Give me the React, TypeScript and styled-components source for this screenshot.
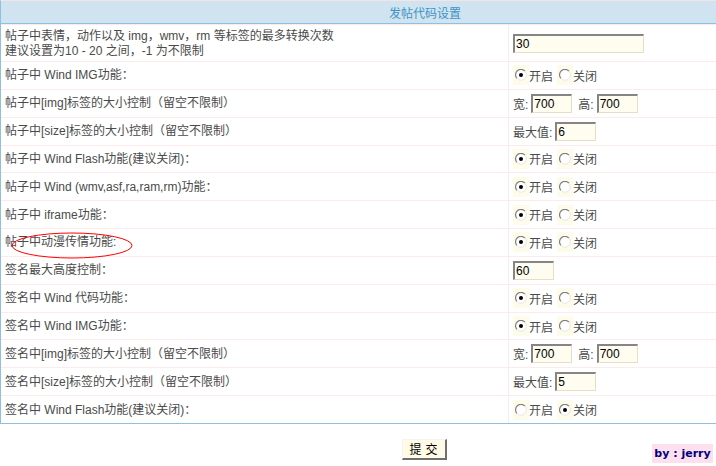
import React from "react";
import styled, { createGlobalStyle } from "styled-components";

const Global = createGlobalStyle`
  html, body {
    margin: 0;
    padding: 0;
    background: #ffffff;
    overflow: hidden;
  }
  body {
    font-family: "Liberation Sans", "Noto Sans CJK SC", sans-serif;
    font-size: 12px;
    color: #4a4a4a;
  }
`;

const Page = styled.div`
  position: relative;
  width: 716px;
  height: 466px;
  overflow: hidden;
`;

const Table = styled.div`
  width: 848px;
  display: grid;
  grid-template-columns: 508px 1fr;
  border-top: 1px solid #f6e4e4;
  border-left: 1px solid #8fc0e0;
  border-bottom: 1px solid #8fc0e0;
  box-sizing: border-box;
`;

const Header = styled.div`
  grid-column: 1 / -1;
  height: 22px;
  background: #cfe4f0;
  border-bottom: 1px solid #8fc0e0;
  color: #3f93c4;
  font-family: "Noto Sans CJK SC", sans-serif;
  font-size: 12px;
  display: flex;
  align-items: center;
  justify-content: center;
  padding-left: 1px;
`;

/* every cell is 27.85px tall including its top rule; the first row is 37px */
const Label = styled.div<{ $tall?: boolean }>`
  box-sizing: border-box;
  height: ${(p) => (p.$tall ? "37px" : "27.85px")};
  border-top: 1px solid #fdeaea;
  border-right: 1px solid #fdeaea;
  padding: 1px 0 0 4px;
  display: flex;
  flex-direction: column;
  justify-content: center;
  line-height: 15px;
  white-space: nowrap;
`;

const Field = styled.div<{ $tall?: boolean }>`
  box-sizing: border-box;
  height: ${(p) => (p.$tall ? "37px" : "27.85px")};
  border-top: 1px solid #fdeaea;
  padding-left: 4px;
  display: flex;
  align-items: center;
  white-space: nowrap;
`;

const TextInput = styled.input<{ $w: number }>`
  width: ${(p) => p.$w}px;
  height: 19px;
  box-sizing: border-box;
  margin: 0;
  padding: 0 1px;
  background: #fffdf0;
  border-style: solid;
  border-width: 2px 1px 1px 2px;
  border-color: #858585 #e4e0c8 #e4e0c8 #858585;
  font-family: "Liberation Sans", sans-serif;
  font-size: 12px;
  color: #000;
  outline: none;
`;

const Caption = styled.span<{ $gap?: number }>`
  margin-left: ${(p) => p.$gap ?? 0}px;
  margin-right: 3px;
`;

const RadioGroup = styled.div`
  display: flex;
  align-items: center;
`;

const RadioBox = styled.span<{ $gap?: number }>`
  width: 16px;
  height: 20px;
  margin-left: ${(p) => p.$gap ?? 0}px;
  background: #fdfbea;
  display: inline-flex;
  align-items: center;
  justify-content: center;
`;

const RadioText = styled.span`
  margin-left: 0;
`;

const Mark = styled.svg`
  position: absolute;
  left: 11px;
  top: 232px;
  pointer-events: none;
`;

const Footer = styled.div`
  width: 848px;
  display: flex;
  justify-content: center;
  padding-top: 15px;
`;

const Submit = styled.button`
  width: 45px;
  height: 21px;
  margin: 0;
  padding: 0;
  background: #fffbe6;
  border-style: solid;
  border-width: 1px 2px 2px 1px;
  border-color: #f4f4f4 #6f6f6f #6f6f6f #f4f4f4;
  font-family: "Noto Sans CJK SC", sans-serif;
  font-size: 12px;
  color: #000;
  letter-spacing: 4px;
  text-indent: 4px;
`;

const Credit = styled.div`
  position: absolute;
  right: 3px;
  bottom: 3px;
  width: 61px;
  height: 19px;
  background: #fde0ee;
  color: #00007f;
  font-family: "DejaVu Sans", sans-serif;
  font-weight: bold;
  font-size: 11px;
  display: flex;
  align-items: center;
  justify-content: center;
`;

function Radio({ on }: { on: boolean }) {
  return (
    <svg width="12" height="12" viewBox="0 0 12 12">
      <circle cx="6" cy="6" r="5.5" fill="#ffffff" />
      <path d="M10 2.2 A5.3 5.3 0 0 0 1.9 9.4" stroke="#7f7f7f" strokeWidth="1.2" fill="none" />
      <path d="M1.9 9.4 A5.3 5.3 0 0 0 10 2.2" stroke="#e6e6e6" strokeWidth="1" fill="none" />
      {on && <circle cx="6" cy="6" r="2" fill="#000" />}
    </svg>
  );
}

function Toggle({ on }: { on: boolean }) {
  return (
    <RadioGroup>
      <RadioBox>
        <Radio on={on} />
      </RadioBox>
      <RadioText>开启</RadioText>
      <RadioBox $gap={4}>
        <Radio on={!on} />
      </RadioBox>
      <RadioText>关闭</RadioText>
    </RadioGroup>
  );
}

function Size() {
  return (
    <>
      <Caption>宽:</Caption>
      <TextInput $w={41} defaultValue="700" />
      <Caption $gap={6}>高:</Caption>
      <TextInput $w={41} defaultValue="700" />
    </>
  );
}

function Max({ v }: { v: string }) {
  return (
    <>
      <Caption>最大值:</Caption>
      <TextInput $w={41} defaultValue={v} />
    </>
  );
}

type Row = { label: React.ReactNode; field: React.ReactNode; tall?: boolean };

const rows: Row[] = [
  {
    label: (
      <>
        <span>帖子中表情，动作以及 img，wmv，rm 等标签的最多转换次数</span>
        <span>建议设置为10 - 20 之间，-1 为不限制</span>
      </>
    ),
    field: <TextInput $w={131} defaultValue="30" />,
    tall: true,
  },
  { label: "帖子中 Wind IMG功能：", field: <Toggle on /> },
  { label: "帖子中[img]标签的大小控制（留空不限制）", field: <Size /> },
  { label: "帖子中[size]标签的大小控制（留空不限制）", field: <Max v="6" /> },
  { label: "帖子中 Wind Flash功能(建议关闭)：", field: <Toggle on /> },
  { label: "帖子中 Wind (wmv,asf,ra,ram,rm)功能：", field: <Toggle on /> },
  { label: "帖子中 iframe功能：", field: <Toggle on /> },
  { label: "帖子中动漫传情功能:", field: <Toggle on /> },
  { label: "签名最大高度控制：", field: <TextInput $w={41} defaultValue="60" /> },
  { label: "签名中 Wind 代码功能：", field: <Toggle on /> },
  { label: "签名中 Wind IMG功能：", field: <Toggle on /> },
  { label: "签名中[img]标签的大小控制（留空不限制）", field: <Size /> },
  { label: "签名中[size]标签的大小控制（留空不限制）", field: <Max v="5" /> },
  { label: "签名中 Wind Flash功能(建议关闭)：", field: <Toggle on={false} /> },
];

export default function App() {
  return (
    <Page>
      <Global />
      <Table>
        <Header>发帖代码设置</Header>
        {rows.map((r, i) => (
          <React.Fragment key={i}>
            <Label $tall={r.tall}>{r.label}</Label>
            <Field $tall={r.tall}>{r.field}</Field>
          </React.Fragment>
        ))}
      </Table>
      <Mark width="124" height="28" viewBox="0 0 124 28">
        <ellipse cx="61" cy="13.5" rx="60" ry="12.5" fill="none" stroke="#ff0000" strokeWidth="1" />
      </Mark>
      <Footer>
        <Submit>提交</Submit>
      </Footer>
      <Credit>by : jerry</Credit>
    </Page>
  );
}
